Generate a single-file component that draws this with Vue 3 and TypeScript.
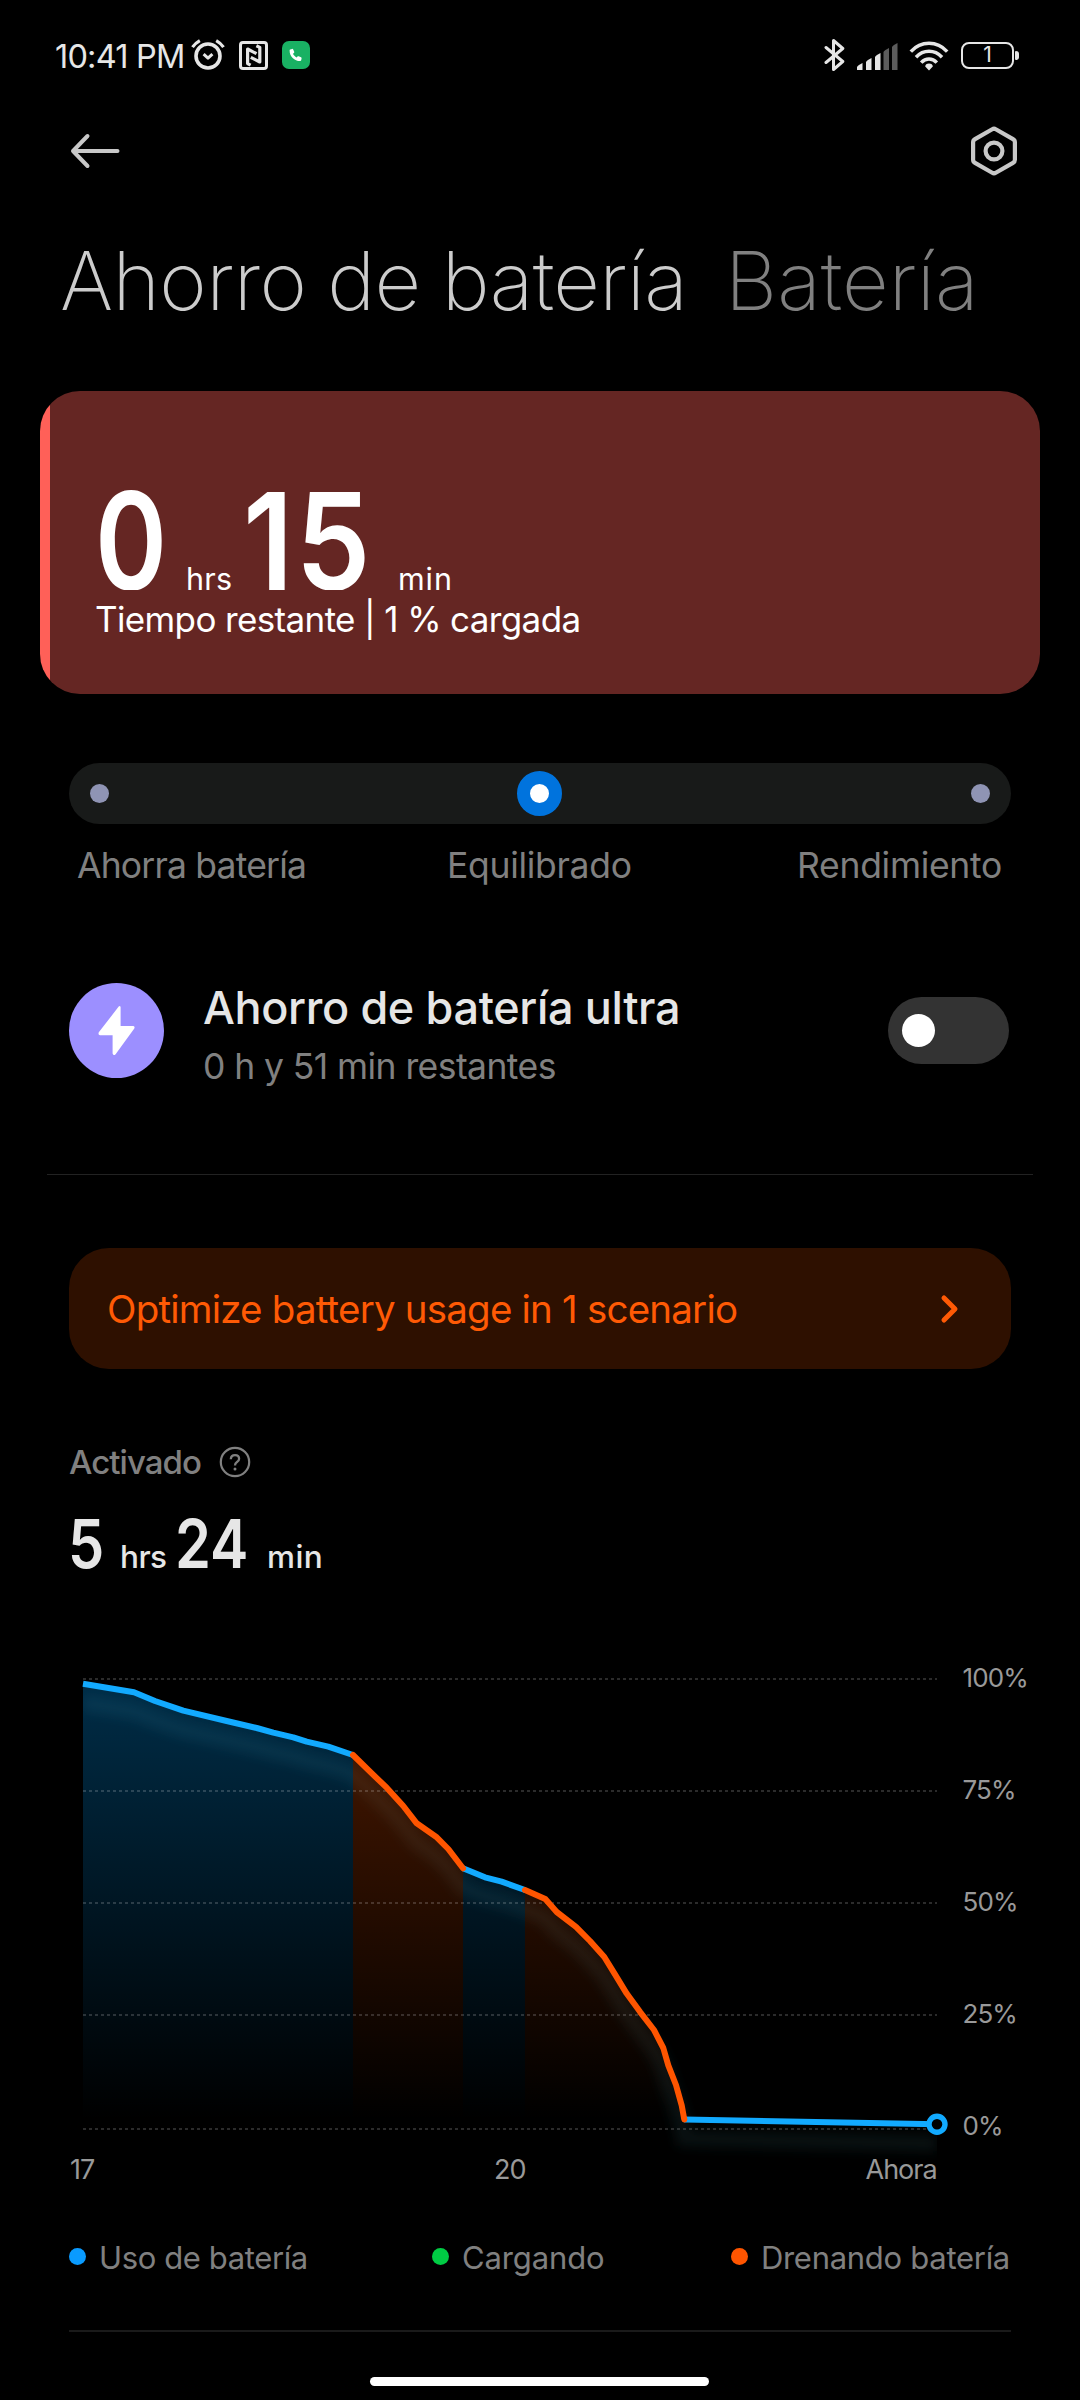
<script setup lang="ts">
interface Point { x: number; y: number }
interface Segment { kind: 'use' | 'drain'; points: Point[]; fill: boolean }

const FLOOR = 2129

const toPoints = (flat: number[]): Point[] => {
  const pts: Point[] = []
  for (let i = 0; i < flat.length; i += 2) pts.push({ x: flat[i], y: flat[i + 1] })
  return pts
}

const segments: Segment[] = [
  {
    kind: 'use', fill: true,
    points: toPoints([83, 1683.7, 134, 1692.3, 155, 1701, 183.3, 1710.7, 226.7, 1721, 256.7, 1728, 273.3, 1732.7, 293.3, 1737.3, 306.7, 1741.7, 328.3, 1746.7, 353, 1755]),
  },
  {
    kind: 'use', fill: true,
    points: toPoints([463, 1868.3, 485, 1877.3, 501.7, 1881.7, 525, 1890]),
  },
  { kind: 'use', fill: false, points: toPoints([684.3, 2119.5, 936.7, 2124.3]) },
  {
    kind: 'drain', fill: true,
    points: toPoints([353, 1755, 370, 1771.7, 386.7, 1787.7, 403.3, 1806, 416.7, 1823.3, 436, 1836.7, 448.3, 1849, 463, 1868.3]),
  },
  {
    kind: 'drain', fill: true,
    points: toPoints([525, 1890, 545.3, 1899, 556.7, 1912, 576, 1926.8, 590, 1941, 604.3, 1957, 615, 1974.3, 626.7, 1993.6, 640, 2011.8, 654, 2030, 663.3, 2048, 668.3, 2065.4, 676, 2085, 681.7, 2105.4, 684.3, 2119.5]),
  },
]

const line = (p: Point[]): string => 'M' + p.map(q => `${q.x} ${q.y}`).join('L')
const area = (p: Point[]): string => `${line(p)}V${FLOOR}H${p[0].x}Z`
const whole = line([...segments.flatMap(s => s.points)].sort((a, b) => a.x - b.x || a.y - b.y))

const grid = [
  { y: 1679, base: 1687, label: '100%' },
  { y: 1791, base: 1799, label: '75%' },
  { y: 1903, base: 1911, label: '50%' },
  { y: 2015, base: 2023, label: '25%' },
  { y: 2129, base: 2135, label: '0%' },
]

const bars = [
  { x: 0, h: 7, on: true },
  { x: 9, h: 12, on: true },
  { x: 18, h: 17, on: true },
  { x: 26.5, h: 22, on: false },
  { x: 35, h: 27, on: false },
]

const modes = ['Ahorra batería', 'Equilibrado', 'Rendimiento']

const legend = [
  { text: 'Uso de batería', color: '#0a9bff', ls: '-0.38px' },
  { text: 'Cargando', color: '#00cc44', ls: '-0.13px' },
  { text: 'Drenando batería', color: '#ff5500', ls: '-0.28px' },
]
</script>

<template>
  <main class="screen">
    <div class="status">
      <span class="clock">10:41 PM</span>
      <svg class="alarm" width="34" height="32" viewBox="0 0 34 32" fill="none" stroke="#e6e6e6" stroke-linecap="round">
        <circle cx="17" cy="17" r="12" stroke-width="3.6" />
        <path d="M12.6 15.2L17 19.2L21.4 15.2" stroke-width="3" stroke-linejoin="round" stroke-linecap="butt" />
        <path d="M1.500 8.200Q4.400 4 8.800 1.600M32.500 8.200Q29.600 4 25.200 1.600" stroke-width="3.2" stroke-linecap="butt" />
      </svg>
      <svg class="nfc" width="29" height="29" viewBox="0 0 29 29" fill="none" stroke="#e6e6e6">
        <rect x="1.5" y="1.5" width="26" height="26" rx="2.5" stroke-width="3" />
        <path d="M11.6 24.2L8.600 22.6V8L17.500 12.700" stroke-width="3.2" stroke-linejoin="round" />
        <path d="M17.4 4.8L20.800 6.4V21L11.800 16.300" stroke-width="3.2" stroke-linejoin="round" />
      </svg>
      <svg class="call" width="28" height="28" viewBox="0 0 28 28">
        <rect width="28" height="28" rx="7" fill="#19b163" />
        <path d="M8.2 8.4l1.9-.5c.5-.1.9.1 1.1.5l1 2.3c.2.4.1.9-.3 1.200l-.9.9c.8 1.600 2 2.800 3.600 3.600l.9-.9c.3-.3.8-.4 1.200-.3l2.300 1c.5.2.7.7.6 1.100l-.4 1.900c-.1.500-.5.800-1 .800c-5.900 0-10.600-4.700-10.600-10.600c0-.500.2-.900.6-1z" fill="#fff" />
      </svg>
      <div class="system">
        <svg width="21" height="34" viewBox="0 0 21 34" fill="none" stroke="#e6e6e6" stroke-width="3" stroke-linejoin="round" stroke-linecap="round">
          <path d="M2 9.500L18.800 23.500L9.500 31.500V2.500L18.800 10.500L2 24.500" />
        </svg>
        <svg class="signal" width="41" height="28" viewBox="0 0 41 28">
          <path
            v-for="b in bars" :key="b.x"
            :d="`M${b.x} 28V${28 - b.h + 4}Q${b.x + 0.5} ${28 - b.h + 2.5} ${b.x + 5.5} ${28 - b.h}V28Z`"
            :fill="b.on ? '#e6e6e6' : '#5c5c5c'"
          />
        </svg>
        <svg class="wifi" width="40" height="30" viewBox="0 0 40 30" fill="none" stroke="#e6e6e6" stroke-width="3.5">
          <path d="M1.800 10.600C12-.4 28-.4 38.200 10.600" />
          <path d="M7 16.200C14.500 8.300 25.500 8.300 33 16.200" />
          <path d="M12.200 21.600C16.800 16.800 23.200 16.800 27.800 21.600" />
          <path d="M20 29.500L16.200 25.600Q16.400 22.600 20 22.600Q23.600 22.600 23.800 25.600Z" fill="#e6e6e6" stroke="none" />
        </svg>
        <div class="cell"><span>1</span></div>
        <i class="nub" />
      </div>
    </div>

    <nav class="nav">
      <svg width="50" height="36" viewBox="0 0 50 36" fill="none" stroke="#c8c8c8" stroke-width="4" stroke-linecap="round" stroke-linejoin="round">
        <path d="M47.500 18H3M17.500 3L3 18L17.500 33" />
      </svg>
      <svg width="48" height="52" viewBox="0 0 48 52" fill="none" stroke="#c8c8c8" stroke-width="4.200">
        <path d="M22.200 4.300Q24 3.200 25.800 4.300L43 14.100Q44.900 15.200 44.900 17.300V34.700Q44.900 36.800 43 37.900L25.800 47.700Q24 48.800 22.200 47.700L5 37.900Q3.100 36.800 3.100 34.700V17.300Q3.100 15.200 5 14.100Z" />
        <circle cx="24" cy="26" r="8.400" />
      </svg>
    </nav>

    <header class="tabs">
      <h1 class="tab on">Ahorro de batería</h1>
      <h1 class="tab">Batería</h1>
    </header>

    <section class="card">
      <div class="remain">
        <span class="digits zero"><b>0</b></span>
        <span class="unit hrs">hrs</span>
        <span class="digits fifteen"><b>15</b></span>
        <span class="unit">min</span>
      </div>
      <p class="caption">Tiempo restante | 1 % cargada</p>
    </section>

    <section class="slider">
      <i class="stop" />
      <i class="knob" />
      <i class="stop" />
    </section>
    <div class="modes">
      <span v-for="m in modes" :key="m">{{ m }}</span>
    </div>

    <section class="ultra">
      <svg width="95" height="95" viewBox="0 0 95 95">
        <circle cx="47.500" cy="47.500" r="47.500" fill="#9c8fff" />
        <path d="M49.700 23.600L29.800 49.300Q28.800 51.800 31 52.200H43.600V70.500Q44.500 73.200 46.600 71.200L65.300 45.400Q66.200 43.300 64.300 42.900H51.600V24.200Q51.200 22.300 49.700 23.600Z" fill="#fff" />
      </svg>
      <div class="ultra-text">
        <span class="ultra-title">Ahorro de batería ultra</span>
        <span class="ultra-sub">0 h y 51 min restantes</span>
      </div>
      <div class="toggle"><i /></div>
    </section>

    <hr class="rule">

    <section class="optimize">
      <span>Optimize battery usage in 1 scenario</span>
      <svg width="20" height="30" viewBox="0 0 20 30" fill="none" stroke="#ff5a05" stroke-width="5" stroke-linecap="round" stroke-linejoin="round">
        <path d="M4 4L15 15L4 26" />
      </svg>
    </section>

    <div class="active">
      <span>Activado</span>
      <svg width="32" height="32" viewBox="0 0 32 32" fill="none" stroke="#808080">
        <circle cx="16" cy="16" r="14.200" stroke-width="2.200" />
        <path d="M11.800 13.200Q12 9.200 16 9.200Q20.100 9.200 20.100 12.800Q20.100 14.800 18 16.100Q16 17.300 16 19.600" stroke-width="2.300" />
        <circle cx="16" cy="23" r="1.500" fill="#808080" stroke="none" />
      </svg>
    </div>
    <div class="elapsed">
      <span class="num five"><b>5</b></span>
      <span class="small ehrs">hrs</span>
      <span class="num tf"><b>24</b></span>
      <span class="small">min</span>
    </div>

    <svg class="chart" width="1080" height="572" viewBox="0 1640 1080 572">
      <defs>
        <linearGradient id="use" gradientUnits="userSpaceOnUse" x1="0" y1="1680" x2="0" y2="2120">
          <stop offset="0" stop-color="#00a0ff" stop-opacity=".28" />
          <stop offset="1" stop-color="#00a0ff" stop-opacity="0" />
        </linearGradient>
        <linearGradient id="drain" gradientUnits="userSpaceOnUse" x1="0" y1="1680" x2="0" y2="2120">
          <stop offset="0" stop-color="#ff5500" stop-opacity=".3" />
          <stop offset="1" stop-color="#ff5500" stop-opacity="0" />
        </linearGradient>
        <filter id="soft" filterUnits="userSpaceOnUse" x="40" y="1660" width="960" height="540">
          <feGaussianBlur stdDeviation="6" />
        </filter>
        <clipPath id="plot"><rect x="83" y="1660" width="854" height="520" /></clipPath>
      </defs>
      <g clip-path="url(#plot)">
        <path :d="whole" transform="translate(0 19)" fill="none" stroke="#4a9aa8" stroke-opacity=".11" stroke-width="16" filter="url(#soft)" />
      </g>
      <template v-for="(s, i) in segments" :key="'a' + i">
        <path v-if="s.fill" :d="area(s.points)" :fill="`url(#${s.kind})`" />
      </template>
      <path
        v-for="g in grid" :key="'g' + g.y" :d="`M83 ${g.y}H937`"
        stroke="#fff" stroke-opacity=".17" stroke-width="2" stroke-dasharray="3 3"
      />
      <path
        v-for="(s, i) in segments" :key="'l' + i" :d="line(s.points)" fill="none"
        :stroke="s.kind === 'use' ? '#12aaff' : '#ff5500'" stroke-width="6" stroke-linejoin="round"
        :stroke-linecap="s.kind === 'use' ? 'butt' : 'round'"
      />
      <circle cx="937" cy="2124.300" r="8" fill="#000" stroke="#12aaff" stroke-width="5.400" />
      <g class="axis">
        <text v-for="g in grid" :key="'t' + g.y" x="962.500" :y="g.base">{{ g.label }}</text>
      </g>
      <g class="hours">
        <text x="70" y="2179">17</text>
        <text x="494" y="2179">20</text>
        <text x="865.500" y="2179">Ahora</text>
      </g>
    </svg>

    <div class="legend">
      <span v-for="l in legend" :key="l.text" class="item">
        <i :style="{ background: l.color }" />
        <span :style="{ letterSpacing: l.ls }">{{ l.text }}</span>
      </span>
    </div>

    <hr class="rule thick">
    <div class="home" />
  </main>
</template>

<style>
body { background: #000; }
</style>

<style scoped>
.screen {
  width: 1080px;
  height: 2400px;
  overflow: hidden;
  background: #000;
  color: #808080;
  font-family: Inter, Roboto, sans-serif;
  display: flex;
  flex-direction: column;
}
.screen > * { flex: none; }
svg { display: block; flex: none; }
i { display: block; flex: none; }

.status { height: 112px; display: flex; align-items: center; padding-left: 55px; }
.clock { width: 136px; font-size: 32.500px; letter-spacing: -0.8px; color: #e6e6e6; white-space: nowrap; }
.alarm { margin-top: -3px; }
.nfc { margin-left: 14px; margin-top: -2px; }
.call { margin-left: 14px; margin-top: -2px; }
.system { margin-left: auto; display: flex; align-items: center; padding-right: 61px; margin-top: -2px; }
.signal { margin-left: 12px; margin-top: 2px; }
.wifi { margin-left: 11px; margin-top: 2px; }
.cell {
  width: 53px; height: 27px; box-sizing: border-box; margin-left: 12px;
  border: 2.5px solid #e6e6e6; border-radius: 8px;
  display: flex; align-items: center; justify-content: center;
  color: #e6e6e6; font-size: 21px; line-height: 20px;
}
.nub { width: 4px; height: 9px; margin-left: 1px; background: #e6e6e6; border-radius: 1px 3px 3px 1px; }

.nav { height: 77px; display: flex; align-items: center; justify-content: space-between; padding: 0 62px 0 70px; }

.tabs { height: 183px; display: flex; align-items: center; padding-left: 60px; }
.tab { margin: 1px 0 0; font-size: 81px; line-height: 182px; font-weight: 240; letter-spacing: -0.8px; white-space: nowrap; }
.tab.on { width: 665px; color: #ccc; }
.tab.on { word-spacing: -1px; letter-spacing: -0.65px; }
.tab:not(.on) { letter-spacing: 0; }

.card {
  margin: 19px 40px 0; height: 303px; border-radius: 40px; overflow: hidden; box-sizing: border-box;
  padding: 89px 0 0 55px; color: #fff;
  background: linear-gradient(90deg, #ff6058 10px, #652623 10px);
}
.remain { height: 110px; overflow: hidden; display: flex; align-items: flex-end; }
.digits b, .num b { display: inline-block; font-weight: 600; transform-origin: 0 50%; }
.digits { font-size: 135px; line-height: 98px; height: 98px; white-space: nowrap; }
.zero { width: 91px; }
.zero b { transform: scaleX(0.81); }
.fifteen { width: 155px; }
.fifteen b { transform: scaleX(0.88); letter-spacing: 3px; font-weight: 570; }
.unit { font-size: 30.500px; line-height: 22px; }
.hrs { width: 57px; letter-spacing: 0.24px; }
.unit:last-child { letter-spacing: 0.9px; }
.caption { margin: 4px 0 0; font-size: 35px; line-height: 50px; letter-spacing: -0.63px; white-space: nowrap; }

.slider {
  margin: 69px 69px 0; height: 61px; border-radius: 30.500px; background: #181a19;
  display: flex; align-items: center; justify-content: space-between; padding: 0 21px;
}
.stop { width: 19px; height: 19px; border-radius: 50%; background: #8f94b4; }
.knob { width: 19px; height: 19px; border: 13px solid #0073dd; border-radius: 50%; background: #fff; margin-right: 1px; }
.modes {
  margin: 21px 78px 0 77px; height: 42px; display: flex;
  font-size: 35.500px; line-height: 42px; letter-spacing: -0.3px; font-weight: 380; white-space: nowrap;
}
.modes span:first-child { width: 370px; letter-spacing: -0.81px; }
.modes span:last-child { margin-left: auto; }

.ultra { margin: 96px 71px 0 69px; height: 107px; display: flex; align-items: flex-start; }
.ultra-text { margin-left: 39px; flex: 1; display: flex; flex-direction: column; white-space: nowrap; }
.ultra-title { font-size: 45px; line-height: 50px; font-weight: 500; letter-spacing: -0.35px; color: #e6e6e6; }
.ultra-sub { margin-top: 10px; font-size: 35.500px; line-height: 47px; letter-spacing: -0.58px; font-weight: 380; }
.toggle {
  width: 121px; height: 67px; margin-top: 14px; border-radius: 33.500px; background: #333;
  display: flex; align-items: center; padding-left: 14px; box-sizing: border-box;
}
.toggle i { width: 33px; height: 33px; border-radius: 50%; background: #fff; }

.rule { margin: 84px 47px 0; height: 1px; border: 0; background: #222; }

.optimize {
  margin: 73px 69px 0; height: 121px; border-radius: 40px; background: #2e1000; color: #ff5a05;
  box-sizing: border-box; padding: 0 51px 0 38px; display: flex; align-items: center; justify-content: space-between;
  font-size: 38.500px; letter-spacing: -0.8px; font-weight: 380; white-space: nowrap;
}
.optimize span { margin-top: 1px; }

.active { margin: 73px 69px 0; height: 40px; display: flex; align-items: center; font-size: 33px; font-weight: 500; letter-spacing: -0.95px; }
.active span { width: 150px; }

.elapsed { margin: 37px 0 0 67.500px; height: 49px; display: flex; align-items: flex-end; color: #e6e6e6; }
.num { font-size: 67px; line-height: 49px; height: 49px; white-space: nowrap; }
.five { width: 52.500px; }
.num b { transform: scaleX(0.86); }
.small { font-size: 31.500px; line-height: 23px; font-weight: 500; letter-spacing: -0.57px; }
.ehrs { width: 54.500px; }
.tf { width: 92.500px; }
.small:last-child { letter-spacing: 0.4px; }

.chart { margin-top: 72px; }
.axis text { font-size: 26px; fill: #999; letter-spacing: -0.9px; font-weight: 380; }
.hours text { font-size: 27px; fill: #999; letter-spacing: -1px; font-weight: 380; }

.legend { margin: 22px 70px 0 69px; height: 45px; display: flex; font-size: 31px; line-height: 45px; font-weight: 380; }
.item { display: flex; align-items: center; white-space: nowrap; }
.item:nth-child(1) { width: 363px; }
.item:last-child { margin-left: auto; }
.item i { width: 17px; height: 17px; border-radius: 50%; margin-right: 13px; }
.item span { margin-top: 1px; }

.rule.thick { margin: 51px 69px 0; height: 2px; background: #1a1a1a; }
.home { width: 339px; height: 9px; margin: 45px 0 0 370px; border-radius: 4.500px; background: #fff; }
</style>
